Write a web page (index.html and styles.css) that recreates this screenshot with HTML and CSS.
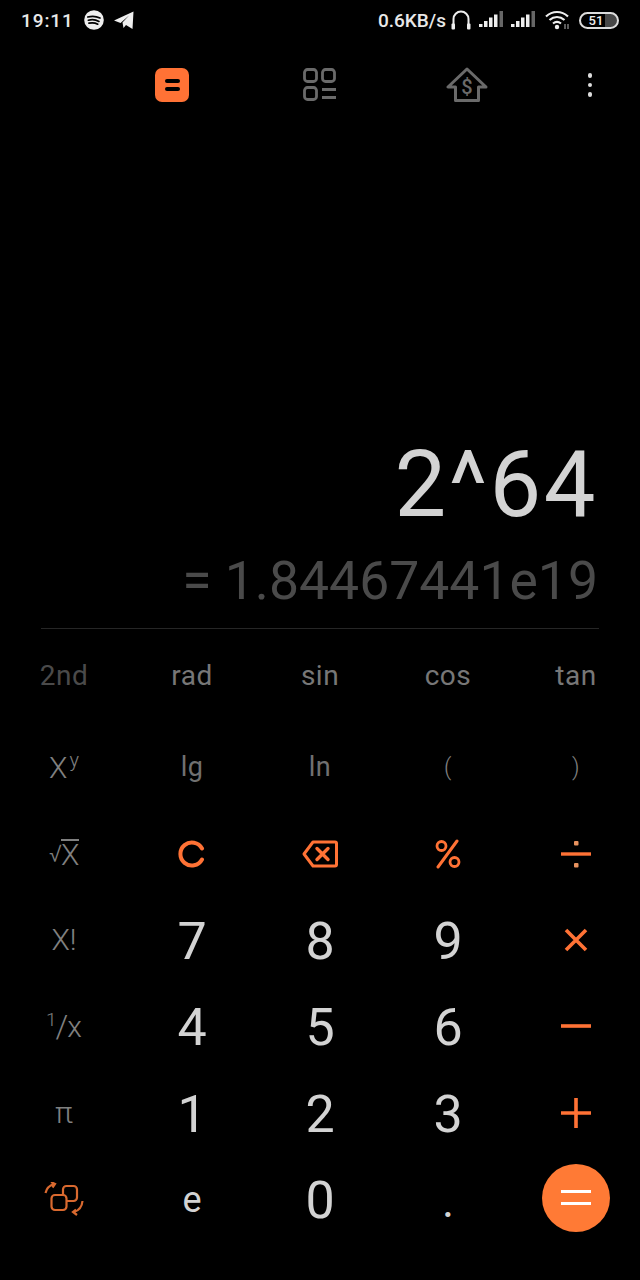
FILE: index.html
```html
<!DOCTYPE html>
<html>
<head>
  <title>Calculator</title>
  <link rel="stylesheet" href="styles.css">
</head>
<body>
  <div class="phone">
    <div class="status">
      <div class="status-left">
        <span class="time">19:11</span>
        <svg class="ic-spotify" width="20" height="20" viewBox="0 0 20 20">
          <circle cx="10" cy="10" r="9.800" fill="#eee"/>
          <path d="M3.800 7c4-1.100 8.500-.8 12.200 1M4.400 10.200c3.500-.9 7.300-.6 10.600 1.200M5 13.200c3-.7 6-.5 8.800 1" fill="none" stroke="#000" stroke-width="1.700" stroke-linecap="round"/>
        </svg>
        <svg class="ic-telegram" width="20" height="18" viewBox="0 0 20 18">
          <path d="M0 9.500 19.500 0.500 18.500 18 12 14 9.500 17 8.500 11.500 15 4.500 6.500 12Z" fill="#eee"/>
        </svg>
      </div>
      <div class="status-right">
        <span class="speed">0.6KB/s</span>
        <svg width="20" height="20" viewBox="0 0 20 20">
          <path d="M2.500 17V9a7.500 7.500 0 0 1 15 0v8" fill="none" stroke="#eee" stroke-width="2"/>
          <rect x="0.500" y="13.500" width="3.500" height="6" rx="1" fill="#eee"/>
          <rect x="16" y="13.500" width="3.500" height="6" rx="1" fill="#eee"/>
        </svg>
        <svg class="signal" width="24" height="18" viewBox="0 0 24 18">
          <path d="M0 13h3.500v3H0zM5 10h3.500v6H5zM10 6.500h3.500V16H10zM15 3.500h3.500V16H15z" fill="#eee"/>
          <path d="M20.500 0H24v16h-3.500z" fill="#666"/>
        </svg>
        <svg class="signal" width="24" height="18" viewBox="0 0 24 18">
          <path d="M0 13h3.500v3H0zM5 10h3.500v6H5zM10 6.500h3.500V16H10zM15 3.500h3.500V16H15z" fill="#eee"/>
          <path d="M20.500 0H24v16h-3.500z" fill="#666"/>
        </svg>
        <svg class="wifi" width="26" height="20" viewBox="0 0 26 20">
          <path d="M1 6.500c6.500-6 15.500-6 22 0M4.500 10c4.500-4 10.500-4 15 0M8 13.500c2.500-2 5.500-2 8 0" fill="none" stroke="#eee" stroke-width="2.200"/>
          <circle cx="12" cy="17" r="2.200" fill="#eee"/>
          <path d="M20 14v5M23 14v5" stroke="#999" stroke-width="1.200"/>
        </svg>
        <div class="battery">51</div>
      </div>
    </div>

    <div class="toolbar">
      <div class="tab tab-on"><i></i><i></i></div>
      <svg class="tab-icon" width="36" height="36" viewBox="0 0 36 36">
        <g fill="none" stroke="#6a6a6a" stroke-width="2.800">
          <rect x="2.500" y="2.500" width="12" height="12" rx="3"/>
          <rect x="20.500" y="2.500" width="12" height="12" rx="3"/>
          <rect x="2.500" y="20.500" width="12" height="12" rx="3"/>
          <path d="M20 22.500h14M20 30.500h14"/>
        </g>
      </svg>
      <svg class="tab-icon house" width="42" height="36" viewBox="0 0 42 36">
        <path d="M21 2 2 20h7.500v13.500h23V20H40Z" fill="none" stroke="#6a6a6a" stroke-width="3" stroke-linejoin="round"/>
        <text x="21" y="27" class="dollar">$</text>
      </svg>
      <div class="more"><i></i><i></i><i></i></div>
    </div>

    <div class="display">
      <div class="expr">2^64</div>
      <div class="result">= 1.84467441e19</div>
    </div>
    <div class="rule"></div>

    <div class="keys">
      <div class="row row-top">
        <span class="key fn dim">2nd</span>
        <span class="key fn">rad</span>
        <span class="key fn">sin</span>
        <span class="key fn">cos</span>
        <span class="key fn">tan</span>
      </div>
      <div class="row">
        <span class="key sci">X<sup>y</sup></span>
        <span class="key fn small">lg</span>
        <span class="key fn small">ln</span>
        <span class="key fn paren">(</span>
        <span class="key fn paren">)</span>
      </div>
      <div class="row">
        <span class="key sci"><small class="root">√</small><span class="over">X</span></span>
        <span class="key">
          <svg width="28" height="28" viewBox="0 0 28 28"><path d="M24 8.500a11.500 11.500 0 1 0 0 11" fill="none" stroke="#ff7235" stroke-width="4" stroke-linecap="round"/></svg>
        </span>
        <span class="key">
          <svg width="36" height="28" viewBox="0 0 36 28"><path d="M11 2h22a1.500 1.500 0 0 1 1.500 1.500v21a1.500 1.500 0 0 1-1.500 1.500H11L2 14Z" fill="none" stroke="#ff7235" stroke-width="3" stroke-linejoin="round"/><path d="M15 8.500 26 19.500M26 8.500 15 19.500" stroke="#ff7235" stroke-width="3.400" stroke-linecap="round"/></svg>
        </span>
        <span class="key">
          <svg width="26" height="30" viewBox="0 0 26 30"><circle cx="6.500" cy="7" r="4.500" fill="none" stroke="#ff7235" stroke-width="2.800"/><circle cx="19.500" cy="23" r="4.500" fill="none" stroke="#ff7235" stroke-width="2.800"/><path d="M22 2 3 28" stroke="#ff7235" stroke-width="3" stroke-linecap="round"/></svg>
        </span>
        <span class="key">
          <svg width="32" height="30" viewBox="0 0 32 30"><path d="M1 15h30" stroke="#ff7235" stroke-width="3.400"/><rect x="14" y="2" width="4.500" height="4.500" rx="1" fill="#e8925f"/><rect x="14" y="24" width="4.500" height="4.500" rx="1" fill="#e8925f"/></svg>
        </span>
      </div>
      <div class="row">
        <span class="key sci">X!</span>
        <span class="key num">7</span>
        <span class="key num">8</span>
        <span class="key num">9</span>
        <span class="key">
          <svg width="26" height="26" viewBox="0 0 26 26"><path d="M3 3 23 23M23 3 3 23" stroke="#ff7235" stroke-width="3.600"/></svg>
        </span>
      </div>
      <div class="row">
        <span class="key sci"><span class="frac-one">1</span><span class="frac-bar">/</span>x</span>
        <span class="key num">4</span>
        <span class="key num">5</span>
        <span class="key num">6</span>
        <span class="key">
          <svg width="32" height="26" viewBox="0 0 32 26"><path d="M1 13h30" stroke="#ff7235" stroke-width="3.600"/></svg>
        </span>
      </div>
      <div class="row">
        <span class="key sci">π</span>
        <span class="key num">1</span>
        <span class="key num">2</span>
        <span class="key num">3</span>
        <span class="key">
          <svg width="32" height="32" viewBox="0 0 32 32"><path d="M1 16h30M16 1v30" stroke="#ff7235" stroke-width="3.600"/></svg>
        </span>
      </div>
      <div class="row">
        <span class="key">
          <svg width="40" height="34" viewBox="0 0 40 34">
            <g fill="none" stroke="#d9692f" stroke-width="2.200">
              <rect x="19" y="4" width="14" height="15" rx="3.500"/>
              <rect x="7.500" y="13" width="15" height="15" rx="3.500" fill="#000"/>
              <path d="M1.500 11C2.500 6.500 5 3.500 10 2M7 0l4 2-2.500 3.500"/>
              <path d="M38.500 19C38 24.500 35 28.500 30 30M33 33l-4-3 3-2.500"/>
            </g>
          </svg>
        </span>
        <span class="key num-small">e</span>
        <span class="key num">0</span>
        <span class="key point">.</span>
        <span class="key"><div class="equals"><i></i><i></i></div></span>
      </div>
    </div>
  </div>
</body>
</html>
```

FILE: styles.css
```css
body {
  margin: 0;
  background: #000;
  font-family: Roboto, sans-serif;
}
.phone {
  width: 640px;
  height: 1280px;
  display: flex;
  flex-direction: column;
  overflow: hidden;
}

/* status bar */
.status {
  height: 40px;
  padding: 0 21px;
  display: flex;
  justify-content: space-between;
  align-items: center;
  color: #e8e8e8;
  font-size: 19px;
  font-weight: 500;
}
.status-left,
.status-right {
  display: flex;
  align-items: center;
}
.time {
  letter-spacing: 0.9px;
  margin-right: 10px;
}
.ic-telegram {
  margin-left: 10px;
}
.speed {
  margin-right: 5px;
}
.signal {
  margin-left: 8px;
}
.wifi {
  margin-left: 10px;
}
.battery {
  width: 40px;
  height: 17px;
  margin-left: 8px;
  border: 2px solid #ddd;
  border-radius: 9px;
  box-sizing: border-box;
  padding-right: 6px;
  font-size: 13px;
  line-height: 13px;
  text-align: center;
  color: #eee;
  background: linear-gradient(90deg, #000 68%, #484848 68%);
}

/* top icons */
.toolbar {
  height: 90px;
  display: grid;
  grid-template-columns: 172px 148px 148px 123px;
  align-items: center;
  justify-items: end;
}
.tab {
  width: 34px;
  height: 34px;
  margin-right: -17px;
  background: #ff7235;
  border-radius: 7px;
  display: flex;
  flex-direction: column;
  align-items: center;
  justify-content: center;
  gap: 4px;
}
.tab i {
  width: 15px;
  height: 4px;
  background: #000;
  border-radius: 2px;
}
.tab-icon {
  margin-right: -18px;
}
.house {
  margin-right: -20px;
}
.dollar {
  font-size: 20px;
  font-weight: 500;
  fill: #6a6a6a;
  text-anchor: middle;
}
.more {
  display: flex;
  flex-direction: column;
  gap: 5px;
  margin-right: -1px;
}
.more i {
  width: 4.500px;
  height: 4.500px;
  border-radius: 50%;
  background: #ddd;
}

/* display */
.display {
  flex: 1;
  display: flex;
  flex-direction: column;
  justify-content: flex-end;
  align-items: flex-end;
  padding-right: 41px;
}
.expr {
  font-size: 92px;
  line-height: 100px;
  letter-spacing: 2.500px;
  margin-right: 1px;
  color: #d3d3d3;
}
.result {
  font-size: 53.500px;
  line-height: 62px;
  margin-top: 15px;
  margin-bottom: 16px;
  margin-right: 1px;
  color: #4a4a4a;
}
.rule {
  height: 1px;
  margin: 0 41px;
  background: #262626;
}

/* keypad */
.keys {
  height: 651px;
}
.row {
  height: 86.400px;
  display: grid;
  grid-template-columns: repeat(5, 128px);
}
.row-top {
  height: 92px;
  margin-bottom: 3px;
}
.key {
  display: flex;
  align-items: center;
  justify-content: center;
  color: #d3d3d3;
}
.fn {
  font-size: 28px;
  letter-spacing: 0.500px;
  color: #777;
}
.fn.dim {
  color: #4a4a4a;
}
.fn.small {
  font-size: 27px;
  color: #707070;
}
.fn.paren {
  font-size: 23px;
  font-weight: 300;
  color: #808080;
}
.sci {
  font-size: 30px;
  color: #808080;
  font-weight: 300;
}
.sci sup {
  font-size: 20px;
  line-height: 0;
  margin-left: 2px;
  position: relative;
  top: -7px;
}
.root {
  font-size: 24px;
  margin-right: -1px;
}
.over {
  border-top: 2px solid #808080;
  line-height: 28px;
}
.frac-one {
  font-size: 19px;
  position: relative;
  top: -7px;
}
.frac-bar {
  font-size: 32px;
  margin: 0 -1px;
}
.num {
  font-size: 52px;
  padding-top: 3px;
}
.num-small {
  font-size: 36px;
  padding-top: 2px;
}
.point {
  font-size: 46px;
  padding-top: 4px;
}
.equals {
  width: 68px;
  height: 68px;
  flex: none;
  margin-top: -3px;
  border-radius: 50%;
  background: #ff7a35;
  display: flex;
  flex-direction: column;
  align-items: center;
  justify-content: center;
  gap: 9px;
}
.equals i {
  width: 30px;
  height: 3px;
  background: #fff;
}
```
